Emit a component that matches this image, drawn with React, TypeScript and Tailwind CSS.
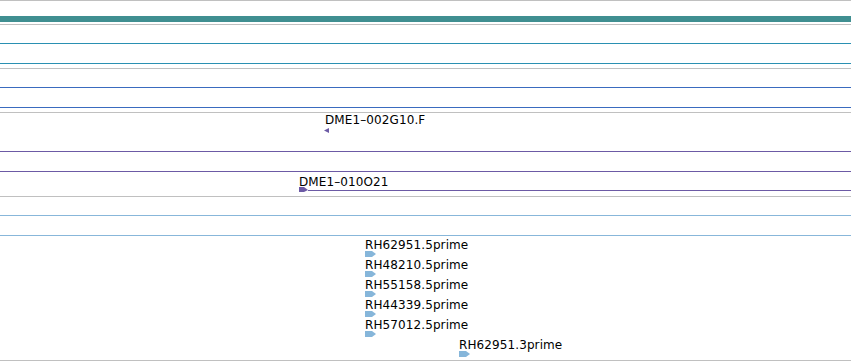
const font = { fontFamily: '"DejaVu Sans", Verdana, sans-serif' }

function Sep() {
  return <div className="h-px bg-[#c0c0c0]" />
}

function Pair({ color }: { color: string }) {
  return (
    <div className="flex flex-col">
      <div className={`h-px ${color}`} />
      <div className="h-[19px]" />
      <div className={`h-px ${color}`} />
    </div>
  )
}

function RhFeature({ label, offset }: { label: string; offset: string }) {
  return (
    <div className={`flex h-[20px] flex-col ${offset}`}>
      <div className="h-[11px] text-[12px] leading-[10px] tracking-[0.1px] text-black whitespace-nowrap">{label}</div>
      <svg width="12" height="6" className="block">
        <polygon points="0,0 7,0 11,3 7,6 0,6" fill="#86b6da" />
      </svg>
    </div>
  )
}

export default function App() {
  const rh = [
    "RH62951.5prime",
    "RH48210.5prime",
    "RH55158.5prime",
    "RH44339.5prime",
    "RH57012.5prime",
  ]

  return (
    <div className="flex h-[361px] w-[851px] flex-col overflow-hidden bg-white" style={font}>
      <Sep />
      <div className="h-[15px]" />
      {/* reference sequence bar */}
      <div className="h-[6px] bg-[#408f91]" />
      <div className="h-[2px]" />
      <Sep />
      <div className="h-[18px]" />
      <Pair color="bg-[#2a90b2]" />
      <div className="h-[4px]" />
      <Sep />
      <div className="h-[18px]" />
      <Pair color="bg-[#3a6bbf]" />
      <div className="h-[4px]" />
      <Sep />

      {/* DME1-002G10.F */}
      <div className="h-[2px]" />
      <div className="ml-[324px] flex h-[36px] flex-col">
        <div className="ml-px h-[11px] text-[12px] leading-[10px] tracking-[0.1px] text-black">DME1–002G10.F</div>
        <svg width="6" height="5" className="mt-[2px] block">
          <polygon points="5,0 0,2.5 5,5" fill="#6c5aa5" />
        </svg>
      </div>
      <Pair color="bg-[#6c5aa5]" />

      {/* DME1-010O21 */}
      <div className="h-[5px]" />
      <div className="ml-[299px] flex h-[19px] flex-col">
        <div className="h-[11px] text-[12px] leading-[10px] tracking-[0.1px] text-black">DME1–010O21</div>
        <div className="-mt-px flex items-end">
          <svg width="9" height="5" className="block shrink-0">
            <polygon points="0,0 5,0 9,3 5,5 0,5" fill="#6c5aa5" />
          </svg>
          <div className="mb-[1px] h-px flex-1 bg-[#6c5aa5]" />
        </div>
      </div>
      <Sep />
      <div className="h-[18px]" />
      <Pair color="bg-[#88b7da]" />

      {/* RH features */}
      <div className="h-[4px]" />
      {rh.map((r) => (
        <RhFeature key={r} label={r} offset="ml-[365px]" />
      ))}
      <RhFeature label="RH62951.3prime" offset="ml-[459px]" />
      <Sep />
    </div>
  )
}
